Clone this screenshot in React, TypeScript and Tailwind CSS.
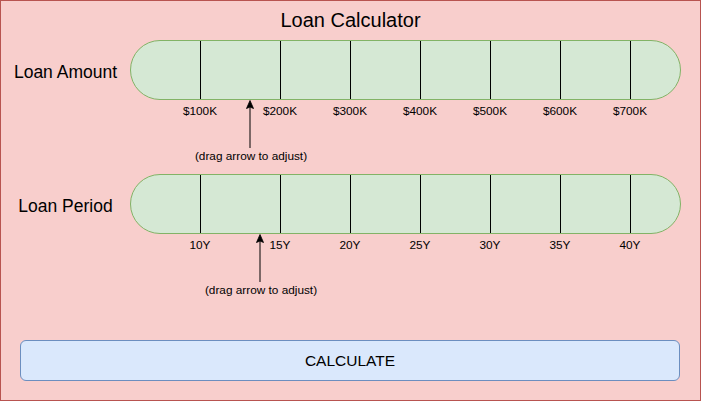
import React from "react";

const font = { fontFamily: '"Liberation Sans", Arial, Helvetica, sans-serif' };

function Arrow() {
  return (
    <svg width="10" height="48" viewBox="0 0 10 48" className="block shrink-0">
      <line x1="5" y1="6" x2="5" y2="48" stroke="#000" strokeWidth="1" />
      <path d="M5 0.5 L8.5 8.5 L5 7 L1.5 8.5 Z" fill="#000" stroke="#000" strokeWidth="0.8" strokeLinejoin="miter" />
    </svg>
  );
}

function Bar() {
  return (
    <div className="flex h-[60px] w-[551px] overflow-hidden rounded-full border border-[#82b366] bg-[#d5e8d4]">
      <div className="w-[69px] shrink-0" />
      <div className="w-[80px] shrink-0 border-l border-black" />
      <div className="w-[70px] shrink-0 border-l border-black" />
      <div className="w-[70px] shrink-0 border-l border-black" />
      <div className="w-[70px] shrink-0 border-l border-black" />
      <div className="w-[70px] shrink-0 border-l border-black" />
      <div className="w-[70px] shrink-0 border-l border-black" />
      <div className="flex-1 border-l border-black" />
    </div>
  );
}

function Row({ label }: { label: string }) {
  return (
    <div className="flex items-center">
      <div className="w-[129px] shrink-0 pt-[3px] text-center text-[17.5px] leading-[20px] text-black">{label}</div>
      <Bar />
    </div>
  );
}

export default function App() {
  return (
    <div
      className="flex h-[401px] w-[701px] flex-col border border-[#b85450] bg-[#f8cecc] text-black"
      style={font}
    >
      <div className="mt-[7px] h-[24px] text-center text-[20px] leading-[24px]">Loan Calculator</div>

      <div className="mt-[8px]">
        <Row label="Loan Amount" />
      </div>

      <div className="flex items-start pl-[164px] text-[11.8px] leading-[14px]">
        <div className="mt-[4px] w-[70px] text-center">$100K</div>
        <div className="ml-[10px]">
          <Arrow />
        </div>
        <div className="mt-[4px] w-[50px] text-center">$200K</div>
        <div className="mt-[4px] ml-[10px] w-[70px] text-center">$300K</div>
        <div className="mt-[4px] w-[70px] text-center">$400K</div>
        <div className="mt-[4px] w-[70px] text-center">$500K</div>
        <div className="mt-[4px] w-[70px] text-center">$600K</div>
        <div className="mt-[4px] w-[70px] text-center">$700K</div>
      </div>
      <div className="mt-[1px] ml-[185px] w-[130px] text-center text-[11.8px] leading-[14px]">
        (drag arrow to adjust)
      </div>

      <div className="mt-[11px]">
        <Row label="Loan Period" />
      </div>

      <div className="flex items-start pl-[164px] text-[11.8px] leading-[14px]">
        <div className="mt-[4px] w-[70px] text-center">10Y</div>
        <div className="ml-[20px]">
          <Arrow />
        </div>
        <div className="mt-[4px] w-[30px] text-center">15Y</div>
        <div className="mt-[4px] ml-[20px] w-[70px] text-center">20Y</div>
        <div className="mt-[4px] w-[70px] text-center">25Y</div>
        <div className="mt-[4px] w-[70px] text-center">30Y</div>
        <div className="mt-[4px] w-[70px] text-center">35Y</div>
        <div className="mt-[4px] w-[70px] text-center">40Y</div>
      </div>
      <div className="mt-[1px] ml-[195px] w-[130px] text-center text-[11.8px] leading-[14px]">
        (drag arrow to adjust)
      </div>

      <div className="mt-[43px] ml-[19px] flex h-[41px] w-[660px] items-center justify-center rounded-[6px] border border-[#6c8ebf] bg-[#dae8fc] text-[15.5px]">
        CALCULATE
      </div>
    </div>
  );
}
